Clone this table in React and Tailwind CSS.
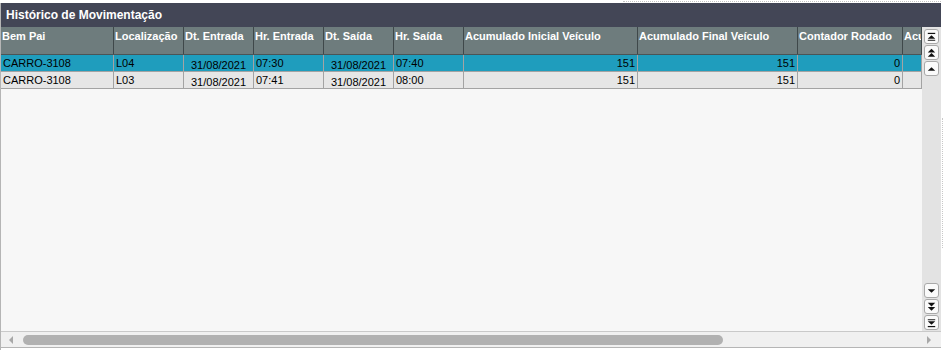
import React from 'react';

const cols = [
  { name: 'Bem Pai', w: 113 },
  { name: 'Localização', w: 70 },
  { name: 'Dt. Entrada', w: 70 },
  { name: 'Hr. Entrada', w: 70 },
  { name: 'Dt. Saída', w: 70 },
  { name: 'Hr. Saída', w: 70 },
  { name: 'Acumulado Inicial Veículo', w: 174 },
  { name: 'Acumulado Final Veículo', w: 160 },
  { name: 'Contador Rodado', w: 105 },
  { name: 'Acu', w: 19 },
];

const rows = [
  ['CARRO-3108', 'L04', '31/08/2021', '07:30', '31/08/2021', '07:40', '151', '151', '0', ''],
  ['CARRO-3108', 'L03', '31/08/2021', '07:41', '31/08/2021', '08:00', '151', '151', '0', ''],
];

const align = ['left', 'left', 'center', 'left', 'center', 'left', 'right', 'right', 'right', 'right'];

function Arrow({ kind }) {
  // kind: first, prev2, prev, next, next2, last
  const up = kind === 'first' || kind === 'prev2' || kind === 'prev';
  const tri = (y) =>
    up ? `M3 ${y + 4}L7 ${y}L11 ${y + 4}Z` : `M3 ${y}L7 ${y + 4}L11 ${y}Z`;
  return (
    <div className="w-[15px] h-[15px] rounded-[3px] border border-[#a9a9a9] bg-[#fafafa] flex items-center justify-center">
      <svg width="14" height="14" viewBox="0 0 14 14">
        {kind === 'first' && (
          <>
            <rect x="3" y="2.5" width="8" height="1.3" fill="#111" />
            <path d={tri(5)} fill="#111" />
            <rect x="3" y="10" width="8" height="1" fill="#111" />
          </>
        )}
        {kind === 'prev2' && (
          <>
            <path d={tri(2.5)} fill="#111" />
            <path d={tri(7)} fill="#111" />
          </>
        )}
        {kind === 'prev' && <path d={tri(5)} fill="#111" />}
        {kind === 'next' && <path d={tri(5)} fill="#111" />}
        {kind === 'next2' && (
          <>
            <path d={tri(2.5)} fill="#111" />
            <path d={tri(7)} fill="#111" />
          </>
        )}
        {kind === 'last' && (
          <>
            <rect x="3" y="3" width="8" height="1" fill="#111" />
            <path d={tri(5)} fill="#111" />
            <rect x="3" y="10.2" width="8" height="1.3" fill="#111" />
          </>
        )}
      </svg>
    </div>
  );
}

export default function App() {
  return (
    <div className="w-[945px] h-[350px] bg-white flex font-['Liberation_Sans',Arial,sans-serif] overflow-hidden">
      <div className="w-[941px] flex flex-col">
        <div className="h-[3px] flex">
          <div className="ml-auto w-[318px] mt-px border-t border-dotted border-[#c4c4c4]" />
        </div>
        <div className="flex-1 flex flex-col border-l border-[#b5b5b5]">
          <div className="h-[24px] bg-[#434656] text-white text-[12px] font-bold pl-[5px] flex items-center">
            Histórico de Movimentação
          </div>
          <div className="flex h-[304px]">
            <div className="w-[921px] overflow-hidden bg-[#f7f7f7]">
              <div className="flex h-[28px] bg-[#6e7c7d] border-b border-[#4b5456] w-max">
                {cols.map((c, i) => (
                  <div
                    key={i}
                    style={{ width: c.w }}
                    className="shrink-0 border-r border-[#3f484a] text-white text-[11px] font-bold leading-[13px] pt-[3px] pl-[1px] whitespace-nowrap overflow-hidden"
                  >
                    {c.name}
                  </div>
                ))}
              </div>
              {rows.map((r, ri) => (
                <div
                  key={ri}
                  className={`flex h-[17px] w-max border-b border-[#a3a3a3] ${ri === 0 ? 'bg-[#1f9dbd]' : 'bg-[#e6e6e6]'}`}
                >
                  {r.map((v, ci) => (
                    <div
                      key={ci}
                      style={{ width: cols[ci].w }}
                      className={`shrink-0 border-r border-[#a3a3a3] text-[11px] text-black leading-[16px] px-[2px] whitespace-nowrap overflow-hidden ${
                        align[ci] === 'center'
                          ? 'text-center pt-[2px]'
                          : align[ci] === 'right'
                          ? 'text-right'
                          : 'text-left'
                      }`}
                    >
                      {v}
                    </div>
                  ))}
                </div>
              ))}
            </div>
            <div className="w-[19px] bg-[#e3e3e3] flex flex-col items-center pt-[2px] pb-[1px]">
              <div className="flex flex-col gap-px">
                <Arrow kind="first" />
                <Arrow kind="prev2" />
                <Arrow kind="prev" />
              </div>
              <div className="mt-auto flex flex-col gap-px">
                <Arrow kind="next" />
                <Arrow kind="next2" />
                <Arrow kind="last" />
              </div>
            </div>
          </div>
          <div className="h-[16px] bg-[#f0f0f0] border-t border-[#c9c9c9] flex items-center px-[6px]">
            <svg width="8" height="10" viewBox="0 0 8 10" className="shrink-0">
              <path d="M6 1L2 5L6 9Z" fill="#a8a8a8" />
            </svg>
            <div className="ml-[8px] w-[700px] h-[10px] rounded-full bg-[#b1b1b1]" />
            <svg width="8" height="10" viewBox="0 0 8 10" className="ml-auto mr-[2px] shrink-0">
              <path d="M2 1L6 5L2 9Z" fill="#a8a8a8" />
            </svg>
          </div>
          <div className="h-[2px] border-t border-[#b5b5b5]" />
        </div>
      </div>
      <div className="flex-1 pt-[118px]">
        <div className="ml-[1px] h-[130px] border-l border-dotted border-[#c8c8c8]" />
      </div>
    </div>
  );
}
